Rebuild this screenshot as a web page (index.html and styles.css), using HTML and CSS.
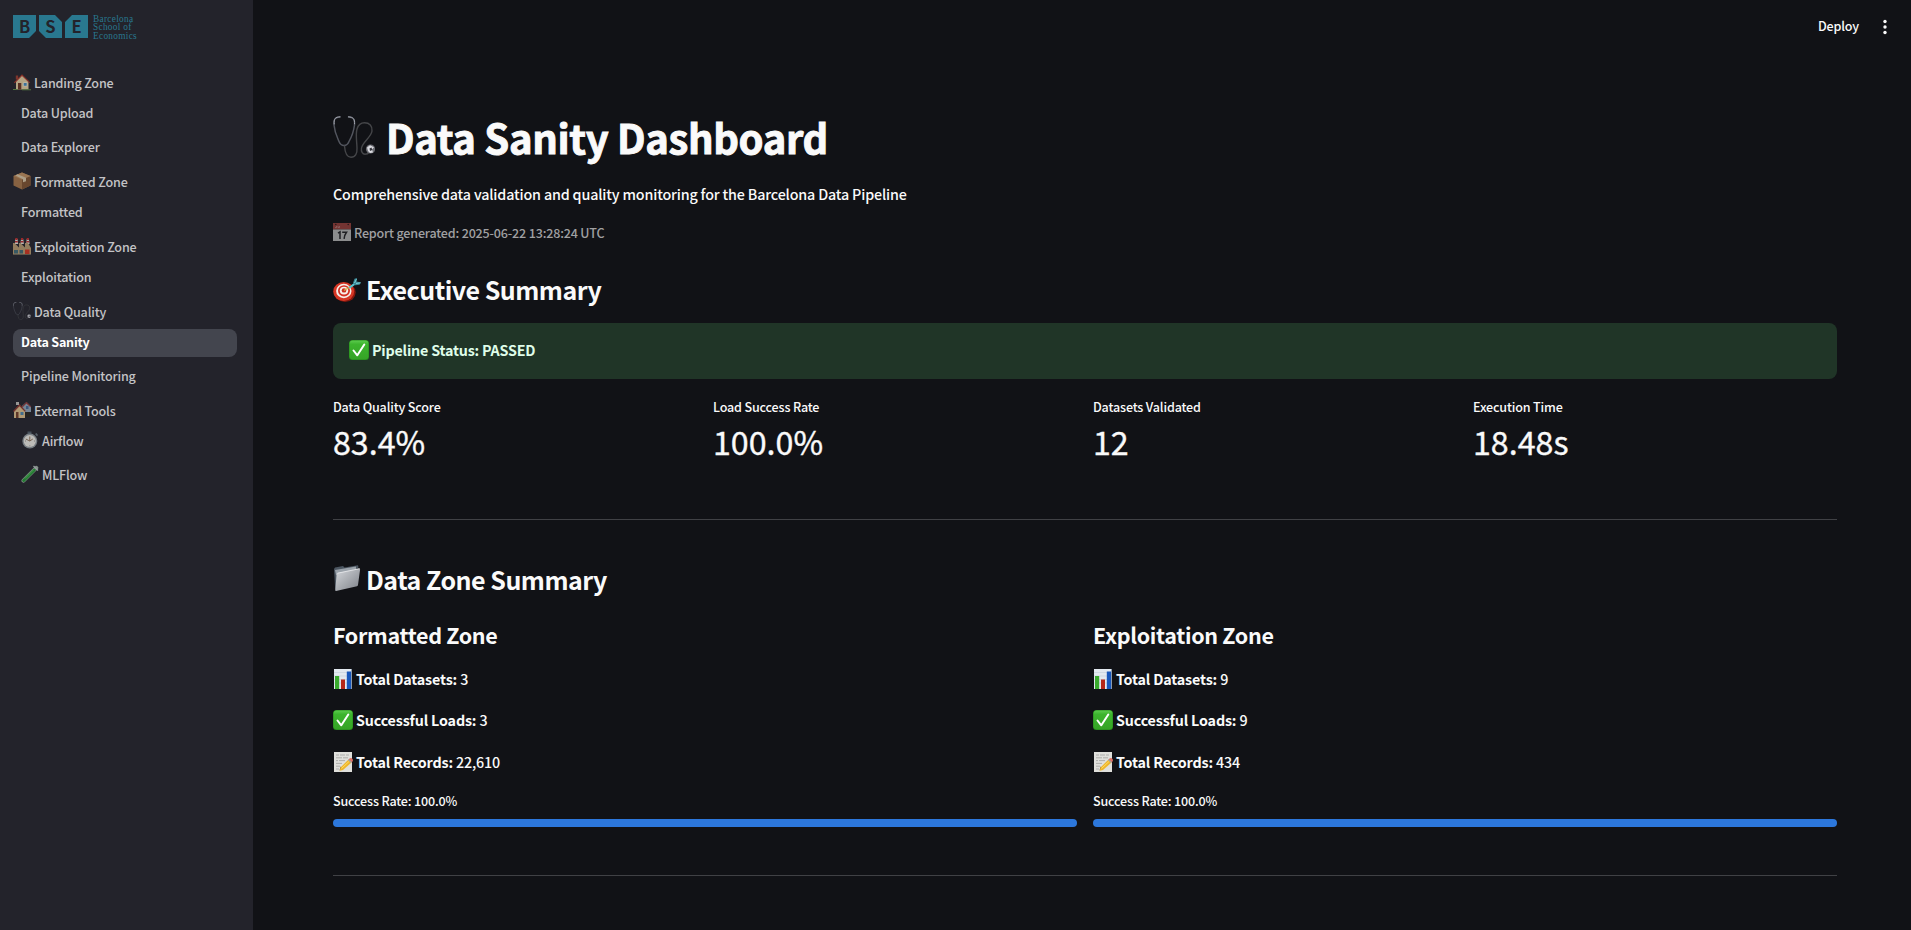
FILE: index.html
```html
<!DOCTYPE html>
<html lang="en">
<head>
<meta charset="utf-8">
<title>Data Sanity Dashboard</title>
<link rel="stylesheet" href="styles.css">
</head>
<body>
<svg class="defs" aria-hidden="true">
  <defs>
    <linearGradient id="silver" x1="0" y1="0" x2="1" y2="1"><stop offset="0" stop-color="#d5d8dc"/><stop offset="1" stop-color="#7d8188"/></linearGradient>
    <linearGradient id="green" x1="0" y1="0" x2="0" y2="1"><stop offset="0" stop-color="#5ccb4e"/><stop offset=".2" stop-color="#3db52e"/><stop offset="1" stop-color="#35a326"/></linearGradient>
  </defs>
  <symbol id="steth" viewBox="0 0 42 42">
    <g fill="none" stroke-linecap="round">
      <path d="M7 1C2 1 .5 3.500 1 9c.7 8 3.500 13 5 16.500 1 2.500 3 4 5 4s4-1.500 5-4C18 22 20.500 17 21.500 9c.5-5.500-1-8-6-8" stroke="#53565f" stroke-width="1.500"/>
      <path d="M7 .8C2 1 .7 3 1.200 8M15.500 .8c5 .2 6.400 2.500 6 7" stroke="#a0a3ac" stroke-width="1"/>
      <path d="M11.500 30c.5 7 2.500 11.200 6.500 11.200 4.500 0 6.300-3.700 6-9.200C23.700 24 22.500 18 24 13c1.200-4 4-6.200 7.500-6.200 5 0 8 3 7.500 8.200-.6 6-9.500 11-10.500 17-.6 3.500 1 6.300 3.500 6.300 2 0 3.500-1 4.500-2.300" stroke="#454649" stroke-width="1.400"/>
    </g>
    <circle cx="37.500" cy="33" r="4.600" fill="#6b6c72"/><path d="M34 31.500l3-2.300 4 2-2 2.300 1 3-3 .5-2-2z" fill="#dcdce2"/><path d="M36.500 32.500l2-1 .8 2.500-2.300 1z" fill="#33343a"/>
  </symbol>
  <symbol id="house" viewBox="0 0 18 18">
    <path d="M2.800 2.500h2.400v4H2.800z" fill="#9a3c2e"/><path d="M3 8l6-6 6.500 6v8.500H3z" fill="#e5cfa2"/><path d="M.8 9.500L9 1.200l8.300 8.300-1 .6L9 3 1.800 10.200z" fill="#a83428"/>
    <path d="M5 10h3.300v6.500H5z" fill="#6c3521"/><path d="M10.200 9.500h4v3.800h-4z" fill="#f6f5e5"/><path d="M10.700 10h3v2.800h-3z" fill="#478dbd"/><path d="M0 16h4l1 1H0zM9 16.200h9v1H9z" fill="#659249"/>
  </symbol>
  <symbol id="box" viewBox="0 0 18 18">
    <path d="M.5 4L9 .5 17.500 4v9.500L9 17.500.5 13.500z" fill="#a9784a"/><path d="M9 7.500L17.500 4v9.500L9 17.500z" fill="#815330"/><path d="M.5 4L9 .5 17.500 4 9 7.500z" fill="#c2915f"/><path d="M4.500 2.300L13 5.800v3.500l-3 1V7.200L2.500 3.500z" fill="#dbc8a6"/>
  </symbol>
  <symbol id="factory" viewBox="0 0 18 18">
    <path d="M2.300 2h2.200l.7 5H1.800zM8 2h2.200l.7 5H7.500zM13.700 2h2.200l.7 5h-3.400z" fill="#e8e4dd"/><path d="M2.300 1h2.200v2H2.300zM8 1h2.200v2H8zM13.700 1h2.200v2h-2.200zM2 4h2.800v1.400H2zM7.700 4h2.800v1.400H7.700zM13.400 4h2.800v1.400h-2.800z" fill="#c32c2b"/>
    <path d="M0 6l1.500 0L6 10.500V6h1.500L12 10.500V6h3l3 5v6.500H0z" fill="#b99b70"/><path d="M1 13h4v3.500H1zM6.500 13h3.500v3.500H6.500z" fill="#406b78"/><path d="M12 12.500h4.500v5H12z" fill="#d4351f"/><path d="M0 17h18v1H0z" fill="#716756"/>
  </symbol>
  <symbol id="houses" viewBox="0 0 18 18">
    <path d="M9 5l4.500-4L18 5.500V11H9z" fill="#91a5b7"/><path d="M9 5.500L13.500 .8 18 5.500l-.6.800-4-3.800-4 4z" fill="#943331"/><path d="M13 5h2.500v3H13z" fill="#466c9a"/>
    <path d="M1 10l5.500-5.500L12 10v7H1z" fill="#dfc28d"/><path d="M0 10l6.500-7 6.300 7-1 .7-5.300-5.500L1 11z" fill="#8d382f"/><path d="M3 1h3v3H3z" fill="#c0beb9"/><path d="M3 11h2.500v6H3z" fill="#743f28"/><path d="M7.500 11h3v3h-3z" fill="#4c88ae"/><path d="M12 11h5v5h-5z" fill="#27251e"/>
  </symbol>
  <symbol id="watch" viewBox="0 0 18 18">
    <path d="M6.500 .5h4v3h-4z" fill="#52606b"/><path d="M14 3l1.500-1L17 4l-1 1.500z" fill="#68747e"/><circle cx="8.800" cy="10" r="7.500" fill="#949da2"/><circle cx="8.800" cy="10" r="6.100" fill="#f0eee7"/><path d="M8.800 10V5.500M8.800 10l3-2M8.800 10l-4-2" stroke="#876a4f" stroke-width=".9"/><path d="M8.800 14.500v.8M4 10h.8M13 10h.8" stroke="#555" stroke-width=".7"/>
  </symbol>
  <symbol id="tube" viewBox="0 0 18 18">
    <path d="M15.300 2.800L2.500 15.700" stroke="#a4b3a9" stroke-width="4" stroke-linecap="round"/><path d="M13.300 5L2.700 15.500" stroke="#249835" stroke-width="3" stroke-linecap="round"/><path d="M12.600 4.800L4 13.500" stroke="#69d36a" stroke-width=".8"/><path d="M12.500 1l4.500 4.500" stroke="#bcc4c6" stroke-width="1.300"/>
  </symbol>
  <symbol id="cal" viewBox="0 0 18 18">
    <path d="M0 0h18v18H0z" fill="#dedfdf"/><path d="M0 0h18v6.500H0z" fill="#b54b45"/><path d="M0 6.200h18v.6H0z" fill="#8c8c8c"/><circle cx="2.800" cy="1.500" r=".8" fill="#33201f"/><circle cx="15.200" cy="1.500" r=".8" fill="#33201f"/><path d="M2 4.600h1.500V3M5 3v1.600h1.500V3" fill="none" stroke="#eeb7b2" stroke-width=".6"/>
    <path d="M5 10.200l2-1.300v7M9.200 9.300h4.300c-1.500 2-2.200 4-2.400 6.600" fill="none" stroke="#292a2d" stroke-width="1.500"/>
  </symbol>
  <symbol id="target" viewBox="0 0 28 24">
    <ellipse cx="12" cy="14.500" rx="10.700" ry="9.500" fill="#82170e"/><ellipse cx="10.700" cy="13.500" rx="10.500" ry="9.500" fill="#d63624"/><ellipse cx="10.800" cy="13" rx="7.700" ry="7.200" fill="#f7efe9"/><ellipse cx="11" cy="12.800" rx="6" ry="5.600" fill="#d43023"/><ellipse cx="11" cy="12.600" rx="4.200" ry="3.900" fill="#f9f1eb"/><ellipse cx="11" cy="12.400" rx="2.300" ry="2.200" fill="#cb2e20"/>
    <path d="M11 12.500l6-3.500" stroke="#d6b54a" stroke-width="1.400"/><path d="M15.500 9l7-5 1 1.800-6.500 4.700z" fill="#58c3cc"/><path d="M20 5l1.500-4.300L24 0l-.5 3.500 4.500 1-1.500 2.200-4.500.500z" fill="#3a8797"/><path d="M21.500 5l2-4M23 5.500l4.500-.7" stroke="#8de1e3" stroke-width=".8"/>
  </symbol>
  <symbol id="check" viewBox="0 0 20 20">
    <rect width="20" height="20" rx="3.500" fill="#278e1d"/><rect x=".6" y=".5" width="18.800" height="18.800" rx="3" fill="url(#green)"/><path d="M4.500 10.500l3.800 4.800L15.300 4.500" fill="none" stroke="#fff" stroke-width="2" stroke-linecap="round" stroke-linejoin="round"/>
  </symbol>
  <symbol id="folder" viewBox="0 0 28 27">
    <path d="M1 4l1-1.500L10 1l1.500 1.500L25 .3l.5 2L4 25.500l-1.800-1z" fill="#4b5560"/><path d="M2 5l9-1.500L23 1.600V4L3 10z" fill="#9aa2aa"/><path d="M4.500 8L26.200 3.500q1-.1.900 1L25 20q-.1 1-1 1.300L3 26q-.8.100-.7-.8L3.600 9q.1-.8.900-1z" fill="url(#silver)"/><path d="M4.500 8.200L26.500 3.700" stroke="#eceef0" stroke-width=".8"/>
  </symbol>
  <symbol id="chart" viewBox="0 0 20 20">
    <path d="M1 0h18v20H1z" fill="#e3e9f0"/><path d="M1 3.500h18M1 7h18M1 10.500h18M1 14h18" stroke="#c3ceda" stroke-width=".6"/><path d="M2 7h4.200v13H2z" fill="#39aa2d"/><path d="M8 10.500h4V20H8z" fill="#b52618"/><path d="M13.800 2.500H18V20h-4.200z" fill="#1857bc"/><path d="M18 0h1v20h-1z" fill="#8b9bae"/>
  </symbol>
  <symbol id="memo" viewBox="0 0 20 20">
    <path d="M1 0h18v20H1z" fill="#e0e0dc"/><path d="M3 3h3m1 0h5m1 0h3M3 5.800h6m1 0h5M3 8.600h2m1 0h6M3 11.400h6M3 14.200h4M3 17h3" stroke="#a1a19e" stroke-width=".8"/><path d="M6.500 18.500l1.200-4L9.500 16z" fill="#5a4630"/><path d="M7.500 15.500L15.500 7.500l3 3L10 18l-3.300.8z" fill="#eeb52b"/><path d="M8.500 16.500l8-7.500" stroke="#ffdd63" stroke-width="1"/><path d="M15.500 7.500l1.300-1.200q2-.8 3 1.200l.1 1.500-1.400 1.500z" fill="#df7568"/><path d="M15 8l3 3 .8-.8-3-3z" fill="#9da3a7"/>
  </symbol>
</svg>

<div class="app">
  <aside class="sidebar">
    <div class="logo">
      <svg class="logo-mark" viewBox="0 0 75 23" role="img" aria-label="BSE">
        <path d="M0 0h23v16l-7 7H0zM26 0h16l7 7v16H33l-7-7zM59 0h16v23H52V7z" fill="#29788f"/>
        <g class="logo-letters"><text x="11.700" y="18">B</text><text x="37.500" y="18">S</text><text x="63.500" y="18">E</text></g>
      </svg>
      <div class="logo-name"><span>Barcelona</span><span>School of</span><span>Economics</span></div>
    </div>
    <nav class="nav">
      <div class="group"><svg class="e-sm"><use href="#house"/></svg>Landing Zone</div>
      <a class="item">Data Upload</a>
      <a class="item">Data Explorer</a>
      <div class="group"><svg class="e-sm"><use href="#box"/></svg>Formatted Zone</div>
      <a class="item">Formatted</a>
      <div class="group"><svg class="e-sm"><use href="#factory"/></svg>Exploitation Zone</div>
      <a class="item">Exploitation</a>
      <div class="group"><svg class="e-sm"><use href="#steth"/></svg>Data Quality</div>
      <a class="item active">Data Sanity</a>
      <a class="item">Pipeline Monitoring</a>
      <div class="group"><svg class="e-sm"><use href="#houses"/></svg>External Tools</div>
      <a class="item"><svg class="e-sm"><use href="#watch"/></svg>Airflow</a>
      <a class="item"><svg class="e-sm"><use href="#tube"/></svg>MLFlow</a>
    </nav>
  </aside>
  <div class="page">
    <header class="toolbar">
      <span class="deploy">Deploy</span>
      <svg class="dots" viewBox="0 0 4 16"><circle cx="2" cy="2.500" r="1.700"/><circle cx="2" cy="8" r="1.700"/><circle cx="2" cy="13.500" r="1.700"/></svg>
    </header>
    <main class="content">
      <h1 class="title"><svg class="e-xl"><use href="#steth"/></svg>Data Sanity Dashboard</h1>
      <p class="lead">Comprehensive data validation and quality monitoring for the Barcelona Data Pipeline</p>
      <p class="caption"><svg class="e-cal"><use href="#cal"/></svg><span>Report generated: 2025-06-22 13:28:24 UTC</span></p>
      <h2 class="section"><svg class="e-target"><use href="#target"/></svg>Executive Summary</h2>
      <div class="alert"><svg class="e-md"><use href="#check"/></svg>Pipeline Status: PASSED</div>
      <div class="metrics">
        <div class="metric"><div class="label">Data Quality Score</div><div class="value">83.4%</div></div>
        <div class="metric"><div class="label">Load Success Rate</div><div class="value">100.0%</div></div>
        <div class="metric"><div class="label">Datasets Validated</div><div class="value">12</div></div>
        <div class="metric"><div class="label">Execution Time</div><div class="value">18.48s</div></div>
      </div>
      <hr class="rule">
      <h2 class="section zone-title"><svg class="e-folder"><use href="#folder"/></svg>Data Zone Summary</h2>
      <div class="zones">
        <section class="zone">
          <h3 class="zone-name">Formatted Zone</h3>
          <p class="stat"><svg class="e-md"><use href="#chart"/></svg><span><b>Total Datasets:</b> 3</span></p>
          <p class="stat"><svg class="e-md"><use href="#check"/></svg><span><b>Successful Loads:</b> 3</span></p>
          <p class="stat"><svg class="e-md"><use href="#memo"/></svg><span><b>Total Records:</b> 22,610</span></p>
          <div class="rate">Success Rate: 100.0%</div>
          <div class="bar"></div>
        </section>
        <section class="zone">
          <h3 class="zone-name">Exploitation Zone</h3>
          <p class="stat"><svg class="e-md"><use href="#chart"/></svg><span><b>Total Datasets:</b> 9</span></p>
          <p class="stat"><svg class="e-md"><use href="#check"/></svg><span><b>Successful Loads:</b> 9</span></p>
          <p class="stat"><svg class="e-md"><use href="#memo"/></svg><span><b>Total Records:</b> 434</span></p>
          <div class="rate">Success Rate: 100.0%</div>
          <div class="bar"></div>
        </section>
      </div>
      <hr class="rule">
    </main>
  </div>
</div>
</body>
</html>
```
FILE: styles.css
```css
* { box-sizing: border-box; margin: 0; }
body {
  background: #111216;
  color: #fafafa;
  font: 500 14.3px/24px "Noto Sans CJK SC", "Open Sans", sans-serif;
  letter-spacing: -.16px;
  height: 930px;
  overflow: hidden;
}
svg { flex: none; display: block; }
.defs { position: absolute; width: 0; height: 0; }
.app { display: flex; height: 930px; }

.sidebar { width: 253px; flex: none; background: #23232b; padding: 15px 16px 0 13px; color: #c3c3c6; font-size: 12.55px; }
.logo { display: flex; gap: 5px; height: 54px; }
.logo-mark { width: 75px; height: 23px; }
.logo-letters { font: 700 16.5px "Noto Sans CJK SC", sans-serif; letter-spacing: 0; fill: #23232b; text-anchor: middle; }
.logo-name { display: flex; flex-direction: column; font: 9.3px/8.3px "Liberation Serif", serif; color: #29788f; letter-spacing: .3px; }
.nav { display: flex; flex-direction: column; }
.group { display: flex; align-items: center; height: 31px; gap: 3px; padding-bottom: 3px; }
.item { display: flex; align-items: center; gap: 3px; height: 28px; margin-bottom: 6px; padding: 0 8px 3px; border-radius: 8px; width: 224px; }
.item.active { background: #43454e; color: #fff; font-weight: 700; letter-spacing: -.22px; }
.e-sm { width: 18px; height: 18px; opacity: .75; margin-top: -3px; }
.item .e-sm { margin-top: -1px; }

.page { flex: 1; min-width: 0; }
.toolbar { display: flex; justify-content: flex-end; align-items: center; gap: 24px; height: 54px; padding-right: 24px; font-size: 12.55px; }
.deploy { margin-top: -2px; }
.dots { width: 4px; height: 16px; fill: #fafafa; }

.content { padding: 57px 74px 0 80px; }
.title { display: flex; align-items: center; gap: 11px; height: 52px; font-size: 40px; line-height: 52px; font-weight: 700; letter-spacing: -.36px; -webkit-text-stroke: .9px #fafafa; }
.e-xl { width: 42px; height: 42px; }
.lead { margin-top: 19px; }
.caption { display: flex; align-items: center; gap: 3px; margin-top: 16px; font-size: 12.55px; line-height: 22px; letter-spacing: -.18px; color: #a0a0a2; }
.e-cal { width: 18px; height: 18px; opacity: .6; margin-top: -2px; }
.section { display: flex; align-items: center; gap: 5px; margin-top: 27px; font-size: 25px; line-height: 36px; font-weight: 700; letter-spacing: -.5px; }
.e-target { width: 28px; height: 24px; margin-top: 2px; }
.e-folder { width: 28px; height: 27px; margin-top: -1px; }
.alert { display: flex; align-items: center; gap: 3px; height: 56px; margin-top: 16px; padding: 0 16px 2px; border-radius: 8px; background: #203527; color: #dffde9; font-weight: 700; letter-spacing: -.2px; }
.e-md { width: 20px; height: 20px; }
.metrics { display: grid; grid-template-columns: repeat(4, 1fr); gap: 16px; margin-top: 18px; }
.label, .rate { font-size: 12.55px; line-height: 20px; }
.value { margin-top: 2px; font-size: 32.2px; line-height: 44px; font-weight: 400; letter-spacing: 0; -webkit-text-stroke: .35px #fafafa; }
.rule { height: 1px; border: 0; margin-top: 56px; background: #404145; }
.zone-title { margin-top: 41px; }
.zones { display: grid; grid-template-columns: 1fr 1fr; gap: 16px; margin-top: 22px; }
.zone-name { font-size: 21.5px; line-height: 32px; font-weight: 700; letter-spacing: -.32px; margin-bottom: 16px; }
.stat { display: flex; align-items: center; gap: 3px; margin-bottom: 17px; }
.stat:nth-of-type(2) { margin-bottom: 18px; }
.stat:nth-of-type(3) { margin-bottom: 16.6px; }
.rate { margin-bottom: 8px; }
.bar { height: 8px; border-radius: 4px; background: #2c77dc; }
.zones + .rule { margin-top: 48px; }
```
